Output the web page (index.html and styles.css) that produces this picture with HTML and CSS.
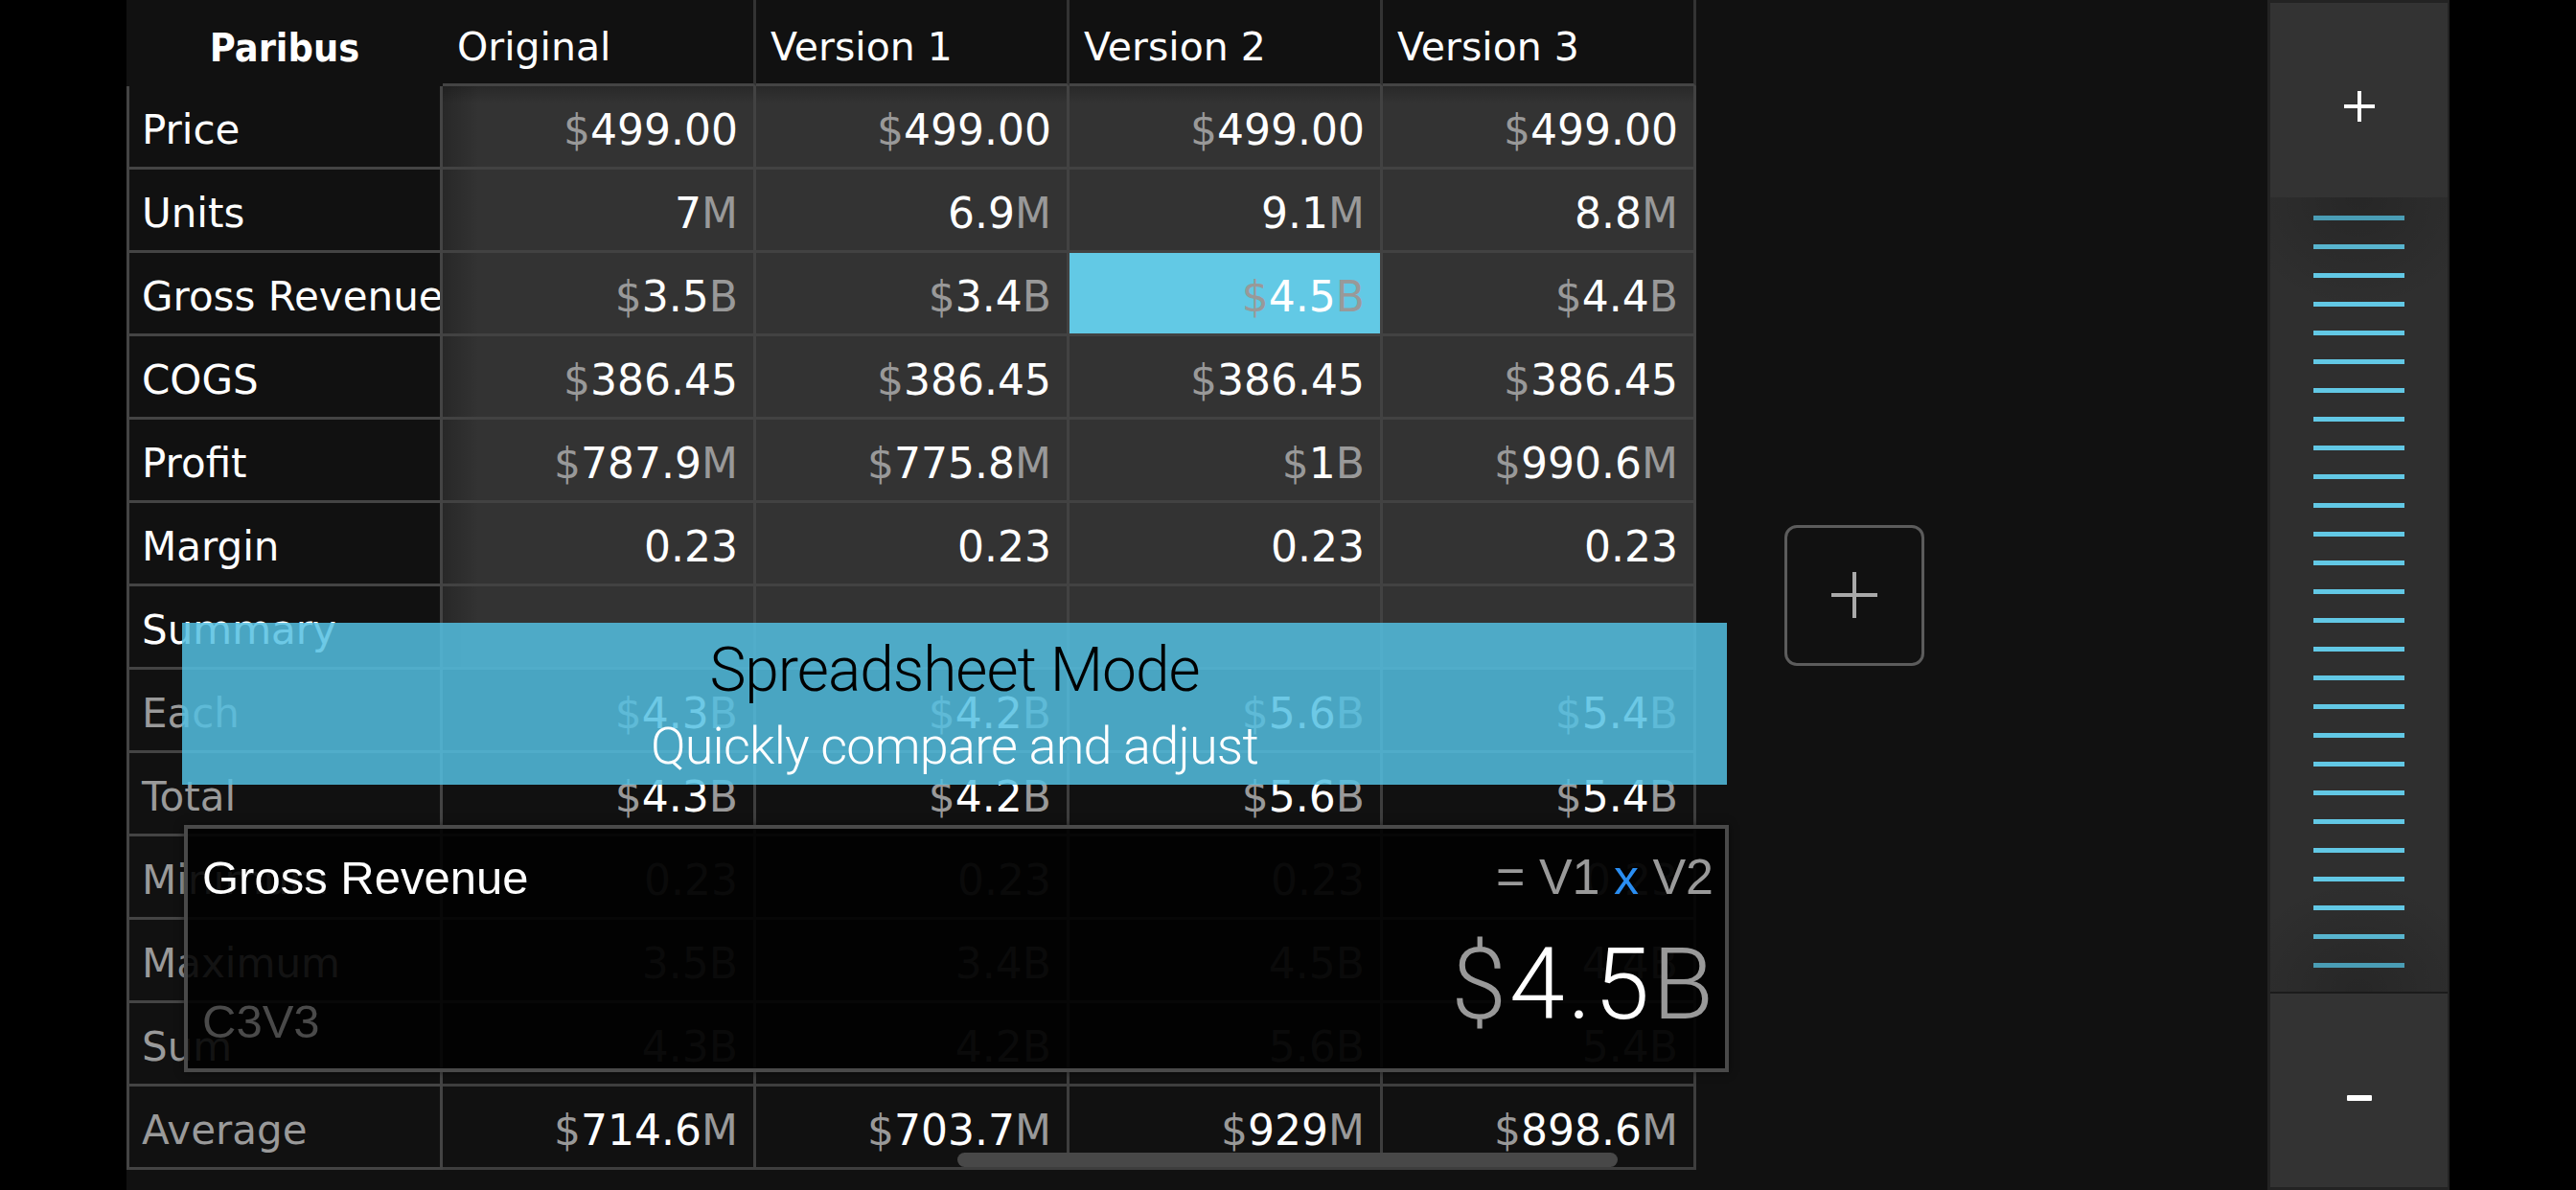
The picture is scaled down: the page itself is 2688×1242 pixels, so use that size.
FILE: index.html
```html
<!DOCTYPE html>
<html>
<head>
<meta charset="utf-8">
<title>Paribus</title>
<link rel="stylesheet" href="styles.css">
</head>
<body>
<div class="screen">
  <div class="gutter"></div>
  <main class="stage">
    <div class="sheet">
      <div class="hd corner">Paribus</div>
      <div class="hd">Original</div>
      <div class="hd">Version 1</div>
      <div class="hd">Version 2</div>
      <div class="hd">Version 3</div>

      <div class="lbl">Price</div>
      <div class="val top first"><span class="u">$</span>499.00</div>
      <div class="val top"><span class="u">$</span>499.00</div>
      <div class="val top"><span class="u">$</span>499.00</div>
      <div class="val top"><span class="u">$</span>499.00</div>

      <div class="lbl">Units</div>
      <div class="val first">7<span class="u">M</span></div>
      <div class="val">6.9<span class="u">M</span></div>
      <div class="val">9.1<span class="u">M</span></div>
      <div class="val">8.8<span class="u">M</span></div>

      <div class="lbl">Gross Revenue</div>
      <div class="val first"><span class="u">$</span>3.5<span class="u">B</span></div>
      <div class="val"><span class="u">$</span>3.4<span class="u">B</span></div>
      <div class="val hl"><span class="u">$</span>4.5<span class="u">B</span></div>
      <div class="val"><span class="u">$</span>4.4<span class="u">B</span></div>

      <div class="lbl">COGS</div>
      <div class="val first"><span class="u">$</span>386.45</div>
      <div class="val"><span class="u">$</span>386.45</div>
      <div class="val"><span class="u">$</span>386.45</div>
      <div class="val"><span class="u">$</span>386.45</div>

      <div class="lbl">Profit</div>
      <div class="val first"><span class="u">$</span>787.9<span class="u">M</span></div>
      <div class="val"><span class="u">$</span>775.8<span class="u">M</span></div>
      <div class="val"><span class="u">$</span>1<span class="u">B</span></div>
      <div class="val"><span class="u">$</span>990.6<span class="u">M</span></div>

      <div class="lbl">Margin</div>
      <div class="val first">0.23</div>
      <div class="val">0.23</div>
      <div class="val">0.23</div>
      <div class="val">0.23</div>

      <div class="lbl">Summary</div>
      <div class="val first"></div>
      <div class="val"></div>
      <div class="val"></div>
      <div class="val"></div>

      <div class="lbl sub">Each</div>
      <div class="val dark"><span class="u">$</span>4.3<span class="u">B</span></div>
      <div class="val dark"><span class="u">$</span>4.2<span class="u">B</span></div>
      <div class="val dark"><span class="u">$</span>5.6<span class="u">B</span></div>
      <div class="val dark"><span class="u">$</span>5.4<span class="u">B</span></div>

      <div class="lbl sub">Total</div>
      <div class="val dark"><span class="u">$</span>4.3<span class="u">B</span></div>
      <div class="val dark"><span class="u">$</span>4.2<span class="u">B</span></div>
      <div class="val dark"><span class="u">$</span>5.6<span class="u">B</span></div>
      <div class="val dark"><span class="u">$</span>5.4<span class="u">B</span></div>

      <div class="lbl sub">Minimum</div>
      <div class="val dark dim">0.23</div>
      <div class="val dark dim">0.23</div>
      <div class="val dark dim">0.23</div>
      <div class="val dark dim">0.23</div>

      <div class="lbl sub">Maximum</div>
      <div class="val dark dim">3.5B</div>
      <div class="val dark dim">3.4B</div>
      <div class="val dark dim">4.5B</div>
      <div class="val dark dim">4.4B</div>

      <div class="lbl sub">Sum</div>
      <div class="val dark dim">4.3B</div>
      <div class="val dark dim">4.2B</div>
      <div class="val dark dim">5.6B</div>
      <div class="val dark dim">5.4B</div>

      <div class="lbl sub">Average</div>
      <div class="val dark"><span class="u">$</span>714.6<span class="u">M</span></div>
      <div class="val dark"><span class="u">$</span>703.7<span class="u">M</span></div>
      <div class="val dark"><span class="u">$</span>929<span class="u">M</span></div>
      <div class="val dark"><span class="u">$</span>898.6<span class="u">M</span></div>
    </div>

    <div class="add-col">
      <svg width="48" height="48" viewBox="0 0 48 48"><path d="M24 0V48M0 24H48" stroke="#a9a9a9" stroke-width="4" fill="none"/></svg>
    </div>

    <div class="banner">
      <div class="banner-title">Spreadsheet Mode</div>
      <div class="banner-sub">Quickly compare and adjust</div>
    </div>

    <div class="formula">
      <div class="pop-head">
        <div class="pop-title">Gross Revenue</div>
        <div class="pop-formula">= V1 <span class="op">x</span> V2</div>
      </div>
      <div class="pop-foot">
        <div class="pop-code">C3V3</div>
        <div class="pop-value"><span class="u">$</span>4.5<span class="u">B</span></div>
      </div>
    </div>

    <div class="scrollbar"></div>
  </main>

  <aside class="rail">
    <div class="rail-btn plus">
      <svg width="32" height="32" viewBox="0 0 32 32"><path d="M16 0V32M0 16H32" stroke="#fff" stroke-width="4" fill="none"/></svg>
    </div>
    <div class="slider">
      <i class="tick t1"></i><i class="tick t2"></i><i class="tick"></i><i class="tick"></i><i class="tick"></i><i class="tick"></i><i class="tick"></i><i class="tick"></i><i class="tick"></i><i class="tick"></i><i class="tick"></i><i class="tick"></i><i class="tick"></i><i class="tick"></i><i class="tick"></i><i class="tick"></i><i class="tick"></i><i class="tick"></i><i class="tick"></i><i class="tick"></i><i class="tick"></i><i class="tick"></i><i class="tick"></i><i class="tick"></i><i class="tick"></i><i class="tick t2"></i><i class="tick t1"></i>
    </div>
    <div class="rail-btn minus"><span class="minus-bar"></span></div>
  </aside>
  <div class="gutter end"></div>
</div>
</body>
</html>
```

FILE: styles.css
```css
html, body {
  margin: 0;
  padding: 0;
  background: #000;
  width: 2688px;
  height: 1242px;
  overflow: hidden;
}

.screen {
  display: flex;
  width: 2688px;
  height: 1242px;
}

.gutter {
  flex: none;
  width: 132px;
  background: #000;
}

.stage {
  flex: none;
  width: 2234px;
  height: 1242px;
  background: #111;
  position: relative;
  display: flex;
  align-items: flex-start;
}

/* ---------- spreadsheet ---------- */
.sheet {
  flex: none;
  display: grid;
  grid-template-columns: 330px repeat(4, 327px);
  grid-template-rows: 90px repeat(13, 87px);
  font-family: "DejaVu Sans", sans-serif;
  color: #fff;
}

.sheet > div {
  box-sizing: border-box;
  display: flex;
  align-items: center;
  white-space: nowrap;
  overflow: hidden;
}

.hd {
  background: #111;
  border-right: 3px solid #333;
  border-bottom: 3px solid #444;
  padding: 11px 0 0 15px;
  font-size: 41px;
}

.hd.corner {
  border: none;
  justify-content: center;
  padding: 9px 0 0 0;
  font-family: "DejaVu Sans Condensed", "DejaVu Sans", sans-serif;
  font-stretch: condensed;
  font-weight: bold;
  font-size: 41px;
}

.lbl {
  background: #111;
  border-left: 3px solid #444;
  border-right: 3px solid #444;
  border-bottom: 3px solid #444;
  padding: 6px 0 0 13px;
  font-size: 42px;
}

.lbl.sub {
  color: #9a9a9a;
}

.val {
  background-color: #333;
  border-right: 3px solid #424242;
  border-bottom: 3px solid #424242;
  justify-content: flex-end;
  padding: 6px 16px 0 0;
  font-size: 44px;
}

.val.first {
  background-image: linear-gradient(90deg, rgba(0,0,0,0.22), rgba(0,0,0,0) 38px);
}

.val.top {
  background-image: linear-gradient(180deg, rgba(0,0,0,0.2), rgba(0,0,0,0) 18px);
}

.val.top.first {
  background-image: linear-gradient(180deg, rgba(0,0,0,0.2), rgba(0,0,0,0) 18px),
                    linear-gradient(90deg, rgba(0,0,0,0.22), rgba(0,0,0,0) 38px);
}

.val.dark {
  background-color: #111;
  border-color: #3e3e3e;
}

.val.dim {
  color: #555;
}

.val.hl {
  background-color: #62c9e5;
}

.u {
  color: #999;
}

/* ---------- add column button ---------- */
.add-col {
  flex: none;
  align-self: center;
  margin-left: 92px;
  width: 146px;
  height: 147px;
  box-sizing: border-box;
  border: 3px solid #5c5c5c;
  border-radius: 13px;
  display: flex;
  align-items: center;
  justify-content: center;
}

/* ---------- overlays ---------- */
.banner {
  position: absolute;
  left: 58px;
  top: 650px;
  width: 1612px;
  height: 169px;
  box-sizing: border-box;
  padding-top: 18px;
  background: rgba(84, 192, 226, 0.85);
  text-align: center;
  font-family: Roboto, "Liberation Sans", sans-serif;
  font-weight: 300;
}

.banner-title {
  font-size: 64px;
  line-height: 64px;
  letter-spacing: -1px;
  color: #000;
}

.banner-sub {
  margin-top: 20px;
  font-size: 54px;
  line-height: 54px;
  letter-spacing: -0.8px;
  color: #fff;
}

.formula {
  position: absolute;
  left: 60px;
  top: 861px;
  width: 1612px;
  height: 258px;
  box-sizing: border-box;
  border: 4px solid #494949;
  background: rgba(0, 0, 0, 0.88);
  box-shadow: 0 0 8px rgba(0, 0, 0, 0.5);
  padding: 0 12px 0 15px;
  font-family: "Liberation Sans", Arial, sans-serif;
}

.pop-head {
  display: flex;
  justify-content: space-between;
  align-items: baseline;
  padding-top: 24px;
}

.pop-title {
  font-size: 49px;
  line-height: 49px;
  color: #fff;
}

.pop-formula {
  font-size: 52px;
  line-height: 52px;
  color: #9a9a9a;
}

.pop-formula .op {
  color: #2a8ef2;
}

.pop-foot {
  display: flex;
  justify-content: space-between;
  align-items: flex-start;
}

.pop-code {
  margin-top: 101px;
  font-size: 49px;
  line-height: 48px;
  color: #4a4a4a;
}

.pop-value {
  margin-top: 35px;
  margin-right: -3px;
  font-family: Roboto, sans-serif;
  font-weight: 300;
  font-size: 104px;
  line-height: 104px;
  letter-spacing: 3px;
  color: #fff;
}

.scrollbar {
  position: absolute;
  left: 867px;
  top: 1203px;
  width: 689px;
  height: 15px;
  border-radius: 8px;
  background: #484848;
}

/* ---------- right rail ---------- */
.rail {
  flex: none;
  width: 190px;
  height: 1242px;
  box-sizing: border-box;
  padding: 3px 2px 3px 3px;
  background: #232323;
  display: flex;
  flex-direction: column;
}

.rail-btn {
  background: #333;
  display: flex;
  justify-content: center;
  align-items: center;
}

.rail-btn.plus {
  height: 203px;
  box-sizing: border-box;
  padding-top: 13px;
}

.slider {
  flex: none;
  box-sizing: border-box;
  height: 831px;
  border-bottom: 2px solid #1b1b1b;
  display: flex;
  flex-direction: column;
  align-items: center;
  gap: 25px;
  padding-top: 19px;
  background:
    radial-gradient(ellipse 70% 14% at 50% 0%, rgba(0,0,0,0.18), rgba(0,0,0,0)),
    radial-gradient(ellipse 70% 14% at 50% 100%, rgba(0,0,0,0.18), rgba(0,0,0,0)),
    #2f2f2f;
}

.tick {
  display: block;
  flex: none;
  width: 95px;
  height: 5px;
  background: #62c8e5;
}

.tick.t1 {
  background: #4a9db5;
}

.tick.t2 {
  background: #58b5cf;
}

.rail-btn.minus {
  flex: 1;
  box-sizing: border-box;
  padding-top: 16px;
}

.minus-bar {
  display: block;
  width: 26px;
  height: 6px;
  border-radius: 1px;
  background: #fff;
}

.gutter.end {
  width: 132px;
}
```
